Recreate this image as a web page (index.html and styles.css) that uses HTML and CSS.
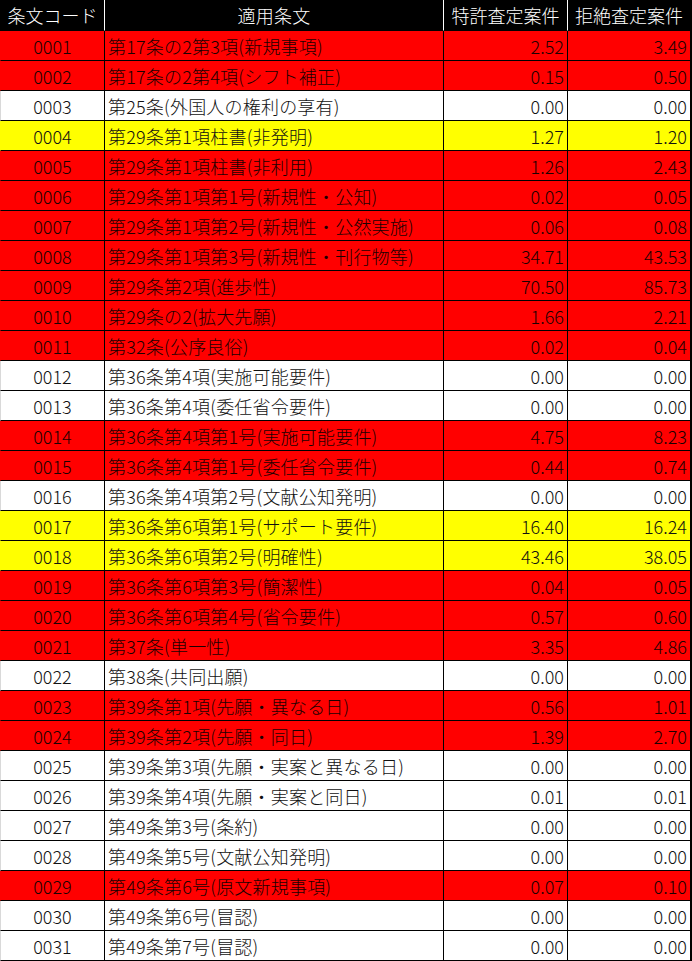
FILE: index.html
```html
<!DOCTYPE html>
<html lang="ja">
<head>
<meta charset="utf-8">
<title>条文コード</title>
<link rel="stylesheet" href="styles.css">
</head>
<body>
<div class="sheet">
  <div class="row head">
    <div class="c code">条文コード</div>
    <div class="c title center">適用条文</div>
    <div class="c num center">特許査定案件</div>
    <div class="c num last center">拒絶査定案件</div>
  </div>
  <div class="row red"><div class="c code">0001</div><div class="c title">第17条の2第3項(新規事項)</div><div class="c num">2.52</div><div class="c num last">3.49</div></div>
  <div class="row red"><div class="c code">0002</div><div class="c title">第17条の2第4項(シフト補正)</div><div class="c num">0.15</div><div class="c num last">0.50</div></div>
  <div class="row white"><div class="c code">0003</div><div class="c title">第25条(外国人の権利の享有)</div><div class="c num">0.00</div><div class="c num last">0.00</div></div>
  <div class="row yellow"><div class="c code">0004</div><div class="c title">第29条第1項柱書(非発明)</div><div class="c num">1.27</div><div class="c num last">1.20</div></div>
  <div class="row red"><div class="c code">0005</div><div class="c title">第29条第1項柱書(非利用)</div><div class="c num">1.26</div><div class="c num last">2.43</div></div>
  <div class="row red"><div class="c code">0006</div><div class="c title">第29条第1項第1号(新規性・公知)</div><div class="c num">0.02</div><div class="c num last">0.05</div></div>
  <div class="row red"><div class="c code">0007</div><div class="c title">第29条第1項第2号(新規性・公然実施)</div><div class="c num">0.06</div><div class="c num last">0.08</div></div>
  <div class="row red"><div class="c code">0008</div><div class="c title">第29条第1項第3号(新規性・刊行物等)</div><div class="c num">34.71</div><div class="c num last">43.53</div></div>
  <div class="row red"><div class="c code">0009</div><div class="c title">第29条第2項(進歩性)</div><div class="c num">70.50</div><div class="c num last">85.73</div></div>
  <div class="row red"><div class="c code">0010</div><div class="c title">第29条の2(拡大先願)</div><div class="c num">1.66</div><div class="c num last">2.21</div></div>
  <div class="row red"><div class="c code">0011</div><div class="c title">第32条(公序良俗)</div><div class="c num">0.02</div><div class="c num last">0.04</div></div>
  <div class="row white"><div class="c code">0012</div><div class="c title">第36条第4項(実施可能要件)</div><div class="c num">0.00</div><div class="c num last">0.00</div></div>
  <div class="row white"><div class="c code">0013</div><div class="c title">第36条第4項(委任省令要件)</div><div class="c num">0.00</div><div class="c num last">0.00</div></div>
  <div class="row red"><div class="c code">0014</div><div class="c title">第36条第4項第1号(実施可能要件)</div><div class="c num">4.75</div><div class="c num last">8.23</div></div>
  <div class="row red"><div class="c code">0015</div><div class="c title">第36条第4項第1号(委任省令要件)</div><div class="c num">0.44</div><div class="c num last">0.74</div></div>
  <div class="row white"><div class="c code">0016</div><div class="c title">第36条第4項第2号(文献公知発明)</div><div class="c num">0.00</div><div class="c num last">0.00</div></div>
  <div class="row yellow"><div class="c code">0017</div><div class="c title">第36条第6項第1号(サポート要件)</div><div class="c num">16.40</div><div class="c num last">16.24</div></div>
  <div class="row yellow"><div class="c code">0018</div><div class="c title">第36条第6項第2号(明確性)</div><div class="c num">43.46</div><div class="c num last">38.05</div></div>
  <div class="row red"><div class="c code">0019</div><div class="c title">第36条第6項第3号(簡潔性)</div><div class="c num">0.04</div><div class="c num last">0.05</div></div>
  <div class="row red"><div class="c code">0020</div><div class="c title">第36条第6項第4号(省令要件)</div><div class="c num">0.57</div><div class="c num last">0.60</div></div>
  <div class="row red"><div class="c code">0021</div><div class="c title">第37条(単一性)</div><div class="c num">3.35</div><div class="c num last">4.86</div></div>
  <div class="row white"><div class="c code">0022</div><div class="c title">第38条(共同出願)</div><div class="c num">0.00</div><div class="c num last">0.00</div></div>
  <div class="row red"><div class="c code">0023</div><div class="c title">第39条第1項(先願・異なる日)</div><div class="c num">0.56</div><div class="c num last">1.01</div></div>
  <div class="row red"><div class="c code">0024</div><div class="c title">第39条第2項(先願・同日)</div><div class="c num">1.39</div><div class="c num last">2.70</div></div>
  <div class="row white"><div class="c code">0025</div><div class="c title">第39条第3項(先願・実案と異なる日)</div><div class="c num">0.00</div><div class="c num last">0.00</div></div>
  <div class="row white"><div class="c code">0026</div><div class="c title">第39条第4項(先願・実案と同日)</div><div class="c num">0.01</div><div class="c num last">0.01</div></div>
  <div class="row white"><div class="c code">0027</div><div class="c title">第49条第3号(条約)</div><div class="c num">0.00</div><div class="c num last">0.00</div></div>
  <div class="row white"><div class="c code">0028</div><div class="c title">第49条第5号(文献公知発明)</div><div class="c num">0.00</div><div class="c num last">0.00</div></div>
  <div class="row red"><div class="c code">0029</div><div class="c title">第49条第6号(原文新規事項)</div><div class="c num">0.07</div><div class="c num last">0.10</div></div>
  <div class="row white"><div class="c code">0030</div><div class="c title">第49条第6号(冒認)</div><div class="c num">0.00</div><div class="c num last">0.00</div></div>
  <div class="row white"><div class="c code">0031</div><div class="c title">第49条第7号(冒認)</div><div class="c num">0.00</div><div class="c num last">0.00</div></div>
</div>
</body>
</html>
```
FILE: styles.css
```css
html, body {
  margin: 0;
  padding: 0;
  background: #ffffff;
}

.sheet {
  width: 692px;
  font-family: "Noto Sans CJK JP", "Noto Sans", sans-serif;
  font-size: 18px;
  font-weight: 300;
  color: #111;
}

.row {
  display: grid;
  grid-template-columns: 105px 339px 124px 124px;
  height: 30px;
}

.row.head {
  height: 31px;
  background: #000;
  color: #fff;
}

.row.red { background: #ff0000; color: #1a0000; }
.row.yellow { background: #ffff00; color: #111; }
.row.white { background: #ffffff; color: #111; }

.c {
  box-sizing: border-box;
  display: flex;
  align-items: center;
  padding-top: 1px;
  border-right: 1px solid #000;
  border-bottom: 1px solid #000;
  white-space: nowrap;
  overflow: hidden;
  line-height: 1;
}

.c.last {
  border-right-width: 2px;
}

.head .c {
  padding-top: 0;
  border-right-color: #fff;
}

.head .c.last {
  border-right-color: #000;
}

.code {
  justify-content: center;
  border-left: 1px solid transparent;
}

.white .code {
  border-left-color: #d9d9d9;
}

.title {
  padding-left: 3px;
  letter-spacing: 0.2px;
}

.num {
  justify-content: flex-end;
  padding-right: 3px;
}

.center {
  justify-content: center;
  padding: 0;
}
```
